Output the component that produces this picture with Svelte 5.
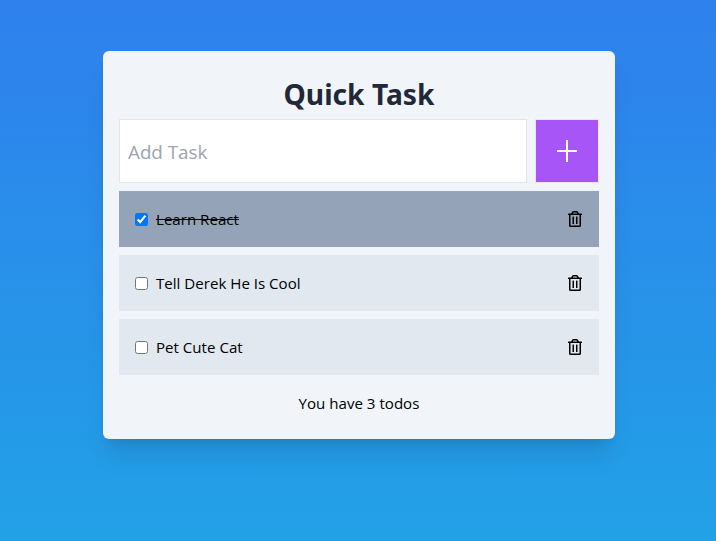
<script>
  let draft = $state('');
  let todos = $state([
    { text: 'Learn React', completed: true },
    { text: 'Tell Derek He Is Cool', completed: false },
    { text: 'Pet Cute Cat', completed: false }
  ]);

  function addTodo(event) {
    event.preventDefault();
    if (!draft.trim()) return;
    todos.push({ text: draft.trim(), completed: false });
    draft = '';
  }
</script>

<div class="page">
  <main class="card">
    <h1>Quick Task</h1>
    <form onsubmit={addTodo}>
      <input class="field" type="text" placeholder="Add Task" bind:value={draft} />
      <button class="add" aria-label="Add">
        <svg width="20" height="22" viewBox="0 0 20 22" stroke="#fff" stroke-width="2" fill="none">
          <path d="M10 0V22M0 11H20" />
        </svg>
      </button>
    </form>
    <ul>
      {#each todos as todo, i}
        <li class:done={todo.completed}>
          <label>
            <input type="checkbox" bind:checked={todo.completed} />
            <span>{todo.text}</span>
          </label>
          <button class="remove" aria-label="Delete" onclick={() => todos.splice(i, 1)}>
            <svg width="16" height="16" viewBox="0 0 448 512" fill="currentColor">
              <path d="M268 416h24a12 12 0 0 0 12-12V188a12 12 0 0 0-12-12h-24a12 12 0 0 0-12 12v216a12 12 0 0 0 12 12zM432 80h-82.41l-34-56.7A48 48 0 0 0 274.41 0H173.59a48 48 0 0 0-41.16 23.3L98.41 80H16A16 16 0 0 0 0 96v16a16 16 0 0 0 16 16h16v336a48 48 0 0 0 48 48h288a48 48 0 0 0 48-48V128h16a16 16 0 0 0 16-16V96a16 16 0 0 0-16-16zM171.84 50.91A6 6 0 0 1 177 48h94a6 6 0 0 1 5.15 2.91L293.61 80H154.39zM368 464H80V128h288zm-212-48h24a12 12 0 0 0 12-12V188a12 12 0 0 0-12-12h-24a12 12 0 0 0-12 12v216a12 12 0 0 0 12 12z" />
            </svg>
          </button>
        </li>
      {/each}
    </ul>
    <p class="count">You have {todos.length} todos</p>
  </main>
</div>

<style>
  .page, .page * { box-sizing: border-box; }
  .page {
    height: 541px;
    padding: 51px 0 0 103px;
    overflow: hidden;
    background: linear-gradient(#2f80ed, #22a1e6);
    font-family: "Open Sans", "Noto Sans", sans-serif;
    font-size: 15.1px;
    line-height: 24px;
    color: #000;
  }
  .card {
    width: 512px;
    height: 388px;
    padding: 16px;
    border-radius: 6px;
    background: #f1f5f9;
    box-shadow: 0 20px 25px -5px rgb(0 0 0 / 0.1), 0 8px 10px -6px rgb(0 0 0 / 0.1);
  }
  h1 {
    margin: 0;
    padding: 9px 0 7px;
    font-family: "Noto Sans", "Open Sans", sans-serif;
    font-size: 28.2px;
    line-height: 36px;
    font-weight: 700;
    text-align: center;
    color: #1f2937;
  }
  form { display: flex; gap: 8px; height: 64px; }
  .field {
    flex: 1;
    min-width: 0;
    padding: 10px 8px 8px;
    border: 1px solid #e2e5e9;
    border-radius: 0;
    background: #fff;
    font: 400 18.8px/28px "Open Sans", "Noto Sans", sans-serif;
    outline: none;
  }
  .field::placeholder { color: #9ca3af; opacity: 1; }
  .add {
    display: flex;
    align-items: center;
    justify-content: center;
    width: 64px;
    padding: 0;
    border: 1px solid #e5e7eb;
    background: #a855f7;
  }
  ul { margin: 0; padding: 0; list-style: none; }
  li {
    display: flex;
    align-items: center;
    justify-content: space-between;
    height: 56px;
    margin: 8px 0;
    padding: 0 16px;
    background: #e2e8f0;
  }
  .done { background: #94a3b8; }
  .done span { text-decoration: line-through; }
  label { display: flex; align-items: center; gap: 8px; }
  label input { width: 13px; height: 13px; margin: 0; }
  .remove { display: flex; padding: 0; border: 0; background: none; color: #000; }
  .count { margin: 0; padding: 8px; text-align: center; }
</style>
